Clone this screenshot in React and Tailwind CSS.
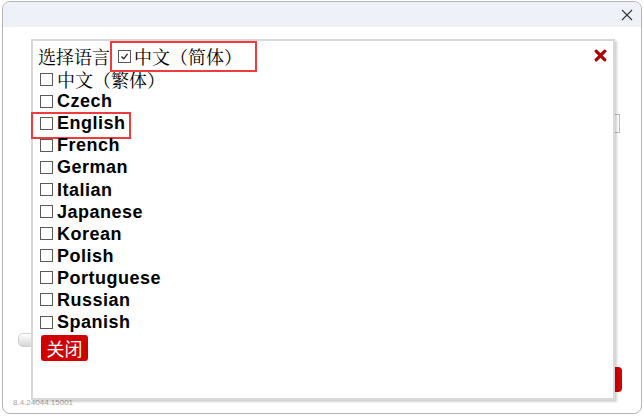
import React from "react";

const cjkSerif = "font-['Noto_Serif_CJK_SC','Noto_Sans_CJK_SC',serif]";

function Box({ checked }) {
  return (
    <span className="inline-flex items-center justify-center w-[13px] h-[13px] border border-[#5a5a5a] bg-white shrink-0">
      {checked && (
        <svg width="9" height="9" viewBox="0 0 9 9">
          <path d="M1.5 4.5 L3.7 6.8 L7.6 1.8" fill="none" stroke="#222" strokeWidth="1.3" />
        </svg>
      )}
    </span>
  );
}

const langs = ["Czech", "English", "French", "German", "Italian", "Japanese", "Korean", "Polish", "Portuguese", "Russian", "Spanish"];

export default function App() {
  return (
    <div className="relative w-[644px] h-[416px] bg-white overflow-hidden font-['Liberation_Sans',Arial,sans-serif]">
      {/* window */}
      <div className="ml-[2px] mt-[1px] w-[640px] h-[413px] border border-[#b4b4b4] rounded-[8px] overflow-hidden flex flex-col bg-white">
        <div className="h-[25px] bg-[#eef2f8] flex justify-end items-center pr-[8px] shrink-0">
          <svg width="12" height="12" viewBox="0 0 12 12">
            <path d="M1 1 L11 11 M11 1 L1 11" stroke="#333" strokeWidth="1.1" />
          </svg>
        </div>
        <div className="flex-1 flex flex-col">
          <div className="mt-[87px] self-end mr-[21px] w-[200px] h-[19px] border border-[#bdbdbd] bg-white" />
          <div className="mt-[200px] ml-[15px] w-[26px] h-[14px] rounded-[5px] border border-[#d0d0d0] bg-gradient-to-b from-white to-[#d6d6d6]" />
          <div className="mt-[20px] self-end mr-[19px] w-[60px] h-[25px] rounded-[4px] bg-[#d40000]" />
          <div className="mt-[7px] ml-[10px] text-[8px] leading-[8px] text-[#a8a8a8]">8.4.24044.15001</div>
        </div>
      </div>

      {/* popup */}
      <div className="absolute left-[31px] top-[39px] w-[584px] h-[361px] bg-white border-2 border-[#d8d8d8] shadow-[2px_2px_2px_rgba(0,0,0,0.18)] pt-[4px] pl-[5px]">
        <svg className="absolute top-[8px] right-[6px]" width="13" height="13" viewBox="0 0 13 13">
          <path d="M2.2 2.2 L10.8 10.8 M10.8 2.2 L2.2 10.8" stroke="#b00000" strokeWidth="3.2" strokeLinecap="round" />
        </svg>

        <div className="flex items-center h-[23px]">
          <span className={`${cjkSerif} text-[18px] leading-[23px] text-black`}>选择语言</span>
          <span className="relative ml-[8px] h-[23px] flex items-center">
            <span className="absolute left-[-8px] top-[-4px] w-[147px] h-[31px] border-2 border-[#ef3b3b] bg-white z-0" />
            <span className="relative z-10 flex items-center">
              <Box checked />
              <span className={`${cjkSerif} ml-[3px] text-[18px] leading-[23px] text-black`}>中文（简体）</span>
            </span>
          </span>
        </div>

        <div className="flex items-center h-[22.1px]">
          <span className="ml-[2px] flex"><Box /></span>
          <span className={`${cjkSerif} ml-[4px] text-[18px] leading-[22px] text-black`}>中文（繁体）</span>
        </div>

        {langs.map((l) => (
          <div key={l} className="relative flex items-center h-[22.1px]">
            {l === "English" && (
              <span className="absolute left-[-7px] top-0 w-[100px] h-[27px] border-2 border-[#ef3b3b]" />
            )}
            <span className="ml-[2px] flex"><Box /></span>
            <span className="ml-[4px] text-[18px] leading-[22px] font-bold tracking-[0.5px] text-black">{l}</span>
          </div>
        ))}

        <button className="mt-[2px] ml-[3px] w-[47px] h-[26px] rounded-[3px] bg-[#d00000] text-white text-[18px] leading-[26px] font-['Noto_Sans_CJK_SC',sans-serif] flex items-center justify-center">
          关闭
        </button>
      </div>
    </div>
  );
}
